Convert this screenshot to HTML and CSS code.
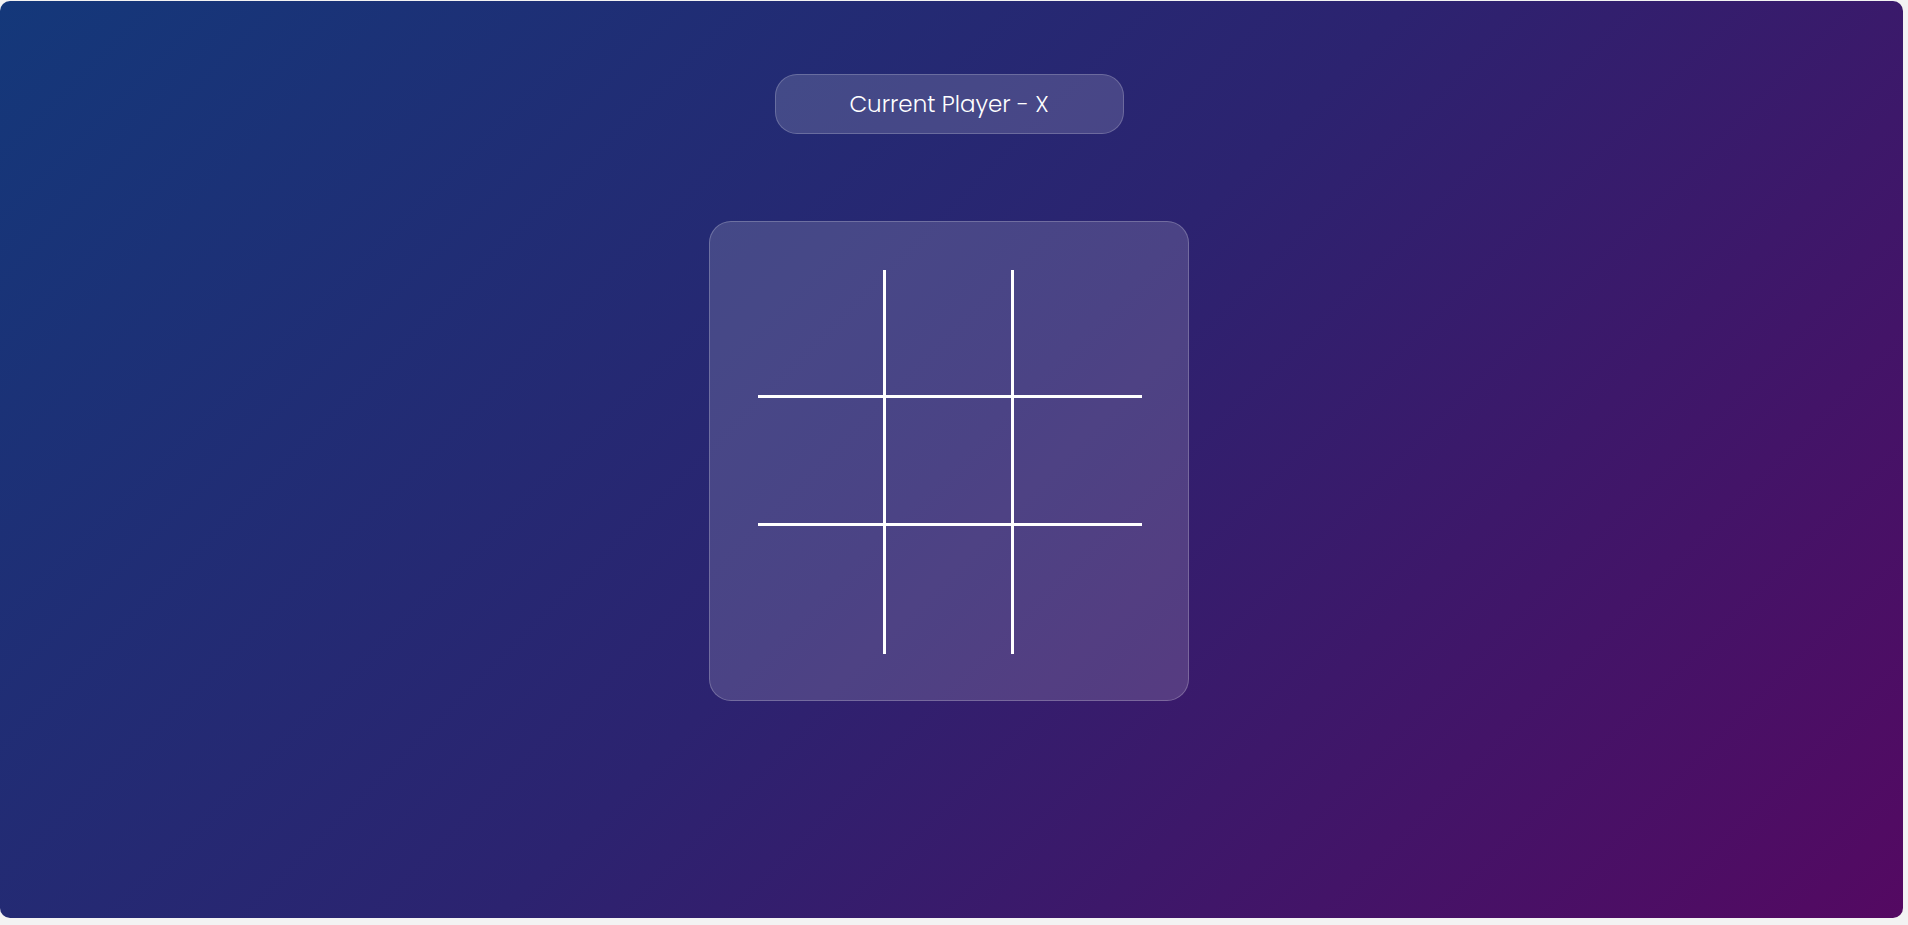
FILE: index.html
```html
<!DOCTYPE html>
<html>
<head>
<meta charset="utf-8">
<title>Tic Tac Toe</title>
<link rel="stylesheet" href="styles.css">
</head>
<body>
<main class="app">
  <div class="status">Current Player - X</div>
  <div class="board">
    <div class="cell"></div>
    <div class="cell"></div>
    <div class="cell"></div>
    <div class="cell"></div>
    <div class="cell"></div>
    <div class="cell"></div>
    <div class="cell"></div>
    <div class="cell"></div>
    <div class="cell"></div>
  </div>
</main>
</body>
</html>
```
FILE: styles.css
```css
html, body {
  margin: 0;
  padding: 0;
  background: #f3f3f3;
}
body {
  padding-top: 1px;
  font-family: "Poppins", Lato, "Open Sans", sans-serif;
}
.app {
  box-sizing: border-box;
  width: 1903px;
  height: 917px;
  border-radius: 10px;
  background: linear-gradient(135deg, #14387a, #2c2370 50%, #540962);
  display: flex;
  flex-direction: column;
  align-items: center;
  padding-top: 73px;
  padding-right: 5px;
}
.status {
  box-sizing: border-box;
  width: 349px;
  height: 60px;
  border-radius: 22px;
  background: rgba(255, 255, 255, 0.15);
  border: 1px solid rgba(255, 255, 255, 0.2);
  color: #fff;
  font-weight: 300;
  font-size: 23px;
  display: flex;
  align-items: center;
  justify-content: center;
}
.board {
  box-sizing: border-box;
  margin-top: 87px;
  width: 480px;
  height: 480px;
  padding: 48px;
  border-radius: 22px;
  background: rgba(255, 255, 255, 0.15);
  border: 1px solid rgba(255, 255, 255, 0.22);
  display: grid;
  grid-template-columns: repeat(3, 128px);
  grid-template-rows: repeat(3, 128px);
}
.cell {
  box-sizing: border-box;
}
.cell:nth-child(3n+1),
.cell:nth-child(3n+2) {
  border-right: 3px solid #fff;
}
.cell:nth-child(-n+6) {
  border-bottom: 3px solid #fff;
}
```
